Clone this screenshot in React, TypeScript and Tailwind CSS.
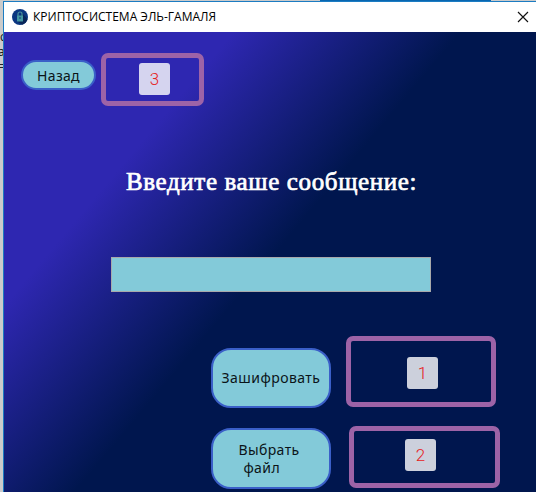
import type { ReactNode } from "react";

function Callout({ label, className }: { label: string; className: string }) {
  return (
    <div className={`box-border flex items-start rounded-[7px] border-5 border-[#9d63a7] ${className}`}>
      <span className="flex h-8 w-[31px] items-center justify-center rounded-[3px] bg-white/80 font-['Roboto',sans-serif] text-[17px] leading-none font-light text-[#e5221d]">
        {label}
      </span>
    </div>
  );
}

function ActionButton({ children, className }: { children: ReactNode; className: string }) {
  return (
    <button
      className={`flex items-center justify-center border-2 border-[#3a5fc8] bg-[#83cad9] font-['Noto_Sans',sans-serif] text-[14px] text-[#0b1418] ${className}`}
    >
      {children}
    </button>
  );
}

function LockIcon() {
  return (
    <svg viewBox="0 0 16 16" className="mr-[5px] h-4 w-4">
      <circle cx="8" cy="8" r="8" fill="#0b3680" />
      <path d="M10 4 15.5 10A8 8 0 0 1 10 15.7L5 12Z" fill="#082659" />
      <path d="M6 7V5a2 2 0 0 1 4 0v2" fill="none" stroke="#4d939f" strokeWidth="1.2" />
      <rect x="5" y="6.5" width="6" height="6" rx=".5" fill="#4597a2" />
      <path d="M8 8v2" stroke="#123e72" />
    </svg>
  );
}

export default function App() {
  return (
    <div className="flex h-[492px] w-[536px] flex-col overflow-hidden bg-[#cbcbcb]">
      <div className="flex h-px shrink-0">
        <div className="ml-80 w-[171px] bg-[#0866b0]" />
      </div>
      <div className="flex min-h-0 flex-1">
        <aside className="flex w-[3px] shrink-0 flex-col overflow-hidden pt-[28px] font-['Noto_Sans',sans-serif] text-[12px] leading-[15px] text-[#222]">
          <span>с</span>
          <span className="-ml-0.5">а</span>
          <span className="-ml-0.5">=</span>
        </aside>
        <main className="flex min-w-0 flex-1 flex-col border-t border-l border-[#1c7cc2]">
          <header className="flex h-[30px] shrink-0 items-center bg-white pr-[7px] pl-2 font-['Open_Sans',sans-serif] text-[12px] text-black">
            <LockIcon />
            <span className="whitespace-nowrap">КРИПТОСИСТЕМА ЭЛЬ-ГАМАЛЯ</span>
            <svg viewBox="0 0 12 12" className="ml-auto h-3 w-3">
              <path d="m1 1 10 10M11 1 1 11" stroke="#111" strokeWidth="1.15" />
            </svg>
          </header>
          <section className="flex flex-1 flex-col bg-[linear-gradient(130deg,#2e27b1_176px,#00164e_350px)]">
            <div className="flex items-start pt-[21px] pl-[17px]">
              <ActionButton className="mt-[7px] h-[30px] w-[75px] rounded-full tracking-[0.3px]">Назад</ActionButton>
              <Callout label="3" className="ml-[5px] h-[53px] w-[103px] pt-[5px] pl-[33px]" />
            </div>
            <h1 className="mt-[61px] h-[30px] pl-[122px] font-['Liberation_Serif',serif] text-[25px] leading-[30px] font-normal tracking-[0.63px] whitespace-nowrap text-white [-webkit-text-stroke:0.7px_white]">
              Введите ваше сообщение:
            </h1>
            <input className="mt-[60px] ml-[107px] h-[35px] w-80 border border-[#a7a9ab] bg-[#83cad9]" />
            <div className="mt-[44px] flex items-start pl-[207px]">
              <ActionButton className="mt-3 h-[60px] w-[120px] rounded-[20px] pb-0.5 tracking-[0.45px]">Зашифровать</ActionButton>
              <Callout label="1" className="ml-[15px] h-[71px] w-[150px] pt-4 pl-[56px]" />
            </div>
            <div className="mt-[18px] flex items-start pl-[207px]">
              <ActionButton className="mt-[2px] h-[61px] w-[120px] rounded-[20px] leading-[18px] tracking-[0.4px]">
                <span className="flex flex-col items-start pr-1">
                  <span>Выбрать</span>
                  <span className="pl-[5px]">файл</span>
                </span>
              </ActionButton>
              <Callout label="2" className="ml-[18px] h-[62px] w-[151px] pt-2 pl-[51px]" />
            </div>
          </section>
        </main>
      </div>
    </div>
  );
}
